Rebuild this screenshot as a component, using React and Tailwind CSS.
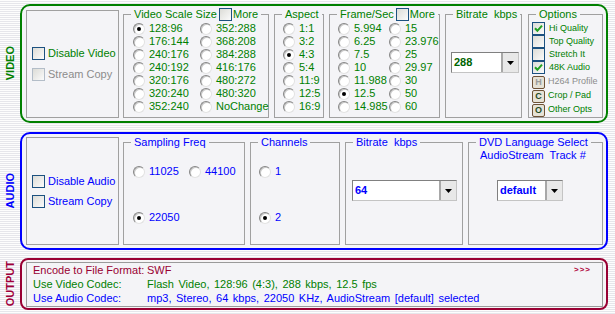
import React from "react";

function Radio({ checked }) {
  return (
    <span className="flex h-[12px] w-[12px] shrink-0 items-center justify-center rounded-full border border-t-[#858585] border-l-[#858585] border-r-[#e2e2e2] border-b-[#e2e2e2] bg-white shadow-[inset_1px_1px_0_#c8c8c8]">
      {checked && <span className="h-[4px] w-[4px] rounded-full bg-black" />}
    </span>
  );
}

function Check({ checked, disabled }) {
  return (
    <span
      className={`flex h-[13px] w-[13px] shrink-0 items-center justify-center border bg-linear-to-br from-[#dcdcd7] to-[#fbfbfb] ${
        disabled ? "border-[#b3bdc8]" : "border-[#1c5180]"
      }`}
    >
      {checked && (
        <svg width="9" height="9" viewBox="0 0 9 9">
          <path d="M1 4.2 L3.4 6.8 L8 1.6" stroke="#21a121" strokeWidth="2" fill="none" />
        </svg>
      )}
    </span>
  );
}

function RadioItem({ label, checked, w }) {
  return (
    <div className={`flex h-[13px] items-center gap-[4px] whitespace-nowrap ${w}`}>
      <Radio checked={checked} />
      <span>{label}</span>
    </div>
  );
}

function Group({ className, legend, children }) {
  return (
    <fieldset className={`shrink-0 border border-[#a0a0a0] ${className}`}>
      <legend className="ml-[7px] px-[3px] leading-[13px]">{legend}</legend>
      {children}
    </fieldset>
  );
}

function Combo({ value, color, w }) {
  return (
    <div className={`flex h-[21px] border border-t-[#808080] border-l-[#808080] border-b-[#c4c4c4] border-r-[#c4c4c4] bg-white ${w}`}>
      <div className={`flex flex-1 items-center pl-[2px] text-[11px] font-bold ${color}`}>{value}</div>
      <div className="flex w-[17px] items-center justify-center border-l-2 border-[#a8a8a8] bg-[#e8e8e8]">
        <svg width="7" height="4" viewBox="0 0 7 4">
          <path d="M0 0h7L3.5 4z" fill="#000" />
        </svg>
      </div>
    </div>
  );
}

function OptBtn({ letter, gray }) {
  return (
    <span
      className={`flex h-[13px] w-[13px] shrink-0 items-center justify-center rounded-[2px] border border-[#6e5236] bg-[#e6e2d6] text-[9px] font-bold leading-none ${
        gray ? "text-[#9a9a9a]" : "text-[#1e4a1e]"
      }`}
    >
      {letter}
    </span>
  );
}

function SideLabel({ text, color }) {
  return (
    <div className="flex w-[20px] shrink-0 items-center justify-center">
      <span className={`rotate-180 text-[11px] font-bold leading-none [writing-mode:vertical-rl] ${color}`}>{text}</span>
    </div>
  );
}

export default function App() {
  const scale1 = ["128:96", "176:144", "240:176", "240:192", "320:176", "320:240", "352:240"];
  const scale2 = ["352:288", "368:208", "384:288", "416:176", "480:272", "480:320", "NoChange"];
  const aspect = ["1:1", "3:2", "4:3", "5:4", "11:9", "12:5", "16:9"];
  const fps1 = ["5.994", "6.25", "7.5", "10", "11.988", "12.5", "14.985"];
  const fps2 = ["15", "23.976", "25", "29.97", "30", "50", "60"];

  return (
    <div className="flex h-[314px] w-[615px] flex-col gap-[9px] overflow-hidden bg-[repeating-linear-gradient(to_bottom,#fdfdfd_0px,#fdfdfd_1px,#e6e6eb_1px,#e6e6eb_2px)] pt-[4px] font-['Liberation_Sans',Arial,sans-serif] text-[11px]">
      {/* VIDEO */}
      <div className="flex h-[119px] shrink-0">
        <SideLabel text="VIDEO" color="text-[#008000]" />
        <div className="flex w-[588px] shrink-0 rounded-[10px] border-2 border-[#008000] bg-[#f4f4f7] pl-[4px] pt-[2px] text-[#008000]">
          <div className="mt-[2px] flex h-[108px] w-[93px] shrink-0 flex-col justify-center gap-[8px] border border-[#a0a0a0] pl-[5px]">
            <div className="flex h-[13px] items-center gap-[3px]">
              <Check />
              <span>Disable Video</span>
            </div>
            <div className="flex h-[13px] items-center gap-[3px] text-[#8c8c8c]">
              <Check disabled />
              <span>Stream Copy</span>
            </div>
          </div>

          <Group
            className="ml-[4px] h-[110px] w-[146px]"
            legend={
              <span className="flex items-center">
                <span>Video Scale Size</span>
                <span className="ml-[2px]">
                  <Check />
                </span>
                <span className="ml-[1px]">More</span>
              </span>
            }
          >
            <div className="flex pl-[9px] pt-[1px]">
              <div className="flex flex-col">
                {scale1.map((s, i) => (
                  <RadioItem key={s} label={s} checked={i === 0} w="w-[67px]" />
                ))}
              </div>
              <div className="flex flex-col">
                {scale2.map((s) => (
                  <RadioItem key={s} label={s} w="w-[66px]" />
                ))}
              </div>
            </div>
          </Group>

          <Group className="ml-[5px] h-[110px] w-[50px]" legend="Aspect">
            <div className="flex flex-col pl-[8px] pt-[1px]">
              {aspect.map((s) => (
                <RadioItem key={s} label={s} checked={s === "4:3"} w="w-[40px]" />
              ))}
            </div>
          </Group>

          <Group
            className="ml-[5px] h-[110px] w-[111px]"
            legend={
              <span className="flex items-center">
                <span>Frame/Sec</span>
                <span className="ml-[2px]">
                  <Check />
                </span>
                <span className="ml-[1px]">More</span>
              </span>
            }
          >
            <div className="flex pl-[8px] pt-[1px]">
              <div className="flex flex-col">
                {fps1.map((s) => (
                  <RadioItem key={s} label={s} checked={s === "12.5"} w="w-[51px]" />
                ))}
              </div>
              <div className="flex flex-col">
                {fps2.map((s) => (
                  <RadioItem key={s} label={s} w="w-[48px]" />
                ))}
              </div>
            </div>
          </Group>

          <Group className="ml-[5px] h-[110px] w-[77px]" legend={<span className="whitespace-pre">Bitrate  kbps</span>}>
            <div className="ml-[5px] mt-[31px]">
              <Combo value="288" color="text-[#006400]" w="w-[68px]" />
            </div>
          </Group>

          <Group className="ml-[6px] h-[110px] w-[75px]" legend="Options">
            <div className="flex flex-col pl-[3px] pt-[1px] text-[9px]">
              <div className="flex h-[13px] items-center gap-[4px]">
                <Check checked />
                <span>Hi Quality</span>
              </div>
              <div className="flex h-[13px] items-center gap-[4px]">
                <Check />
                <span>Top Quality</span>
              </div>
              <div className="flex h-[13px] items-center gap-[4px]">
                <Check />
                <span>Stretch It</span>
              </div>
              <div className="flex h-[13px] items-center gap-[4px]">
                <Check checked />
                <span>48K Audio</span>
              </div>
              <div className="mt-[1px] flex h-[14px] items-center gap-[3px] text-[#8c8c8c]">
                <OptBtn letter="H" gray />
                <span>H264 Profile</span>
              </div>
              <div className="flex h-[14px] items-center gap-[3px]">
                <OptBtn letter="C" />
                <span>Crop / Pad</span>
              </div>
              <div className="flex h-[14px] items-center gap-[3px]">
                <OptBtn letter="O" />
                <span>Other Opts</span>
              </div>
            </div>
          </Group>
        </div>
      </div>

      {/* AUDIO */}
      <div className="-mt-[0px] flex h-[118px] shrink-0">
        <SideLabel text="AUDIO" color="text-[#0000ff]" />
        <div className="flex w-[588px] shrink-0 rounded-[10px] border-2 border-[#0000ff] bg-[#f4f4f7] pl-[4px] pt-[2px] text-[#0000ff]">
          <div className="mt-[1px] flex h-[108px] w-[93px] shrink-0 flex-col justify-center gap-[7px] border border-[#a0a0a0] pl-[5px]">
            <div className="flex h-[13px] items-center gap-[3px]">
              <Check />
              <span>Disable Audio</span>
            </div>
            <div className="flex h-[13px] items-center gap-[3px]">
              <Check />
              <span>Stream Copy</span>
            </div>
          </div>

          <Group className="ml-[4px] h-[109px] w-[122px]" legend="Sampling Freq">
            <div className="flex flex-col pl-[9px] pt-[16px]">
              <div className="flex">
                <RadioItem label="11025" w="w-[56px]" />
                <RadioItem label="44100" w="w-[50px]" />
              </div>
              <div className="mt-[33px] flex">
                <RadioItem label="22050" checked w="w-[56px]" />
              </div>
            </div>
          </Group>

          <Group className="ml-[5px] h-[109px] w-[90px]" legend="Channels">
            <div className="flex flex-col pl-[8px] pt-[16px]">
              <RadioItem label="1" w="w-[40px]" />
              <div className="mt-[33px]">
                <RadioItem label="2" checked w="w-[40px]" />
              </div>
            </div>
          </Group>

          <Group className="ml-[5px] h-[109px] w-[118px]" legend={<span className="whitespace-pre">Bitrate  kbps</span>}>
            <div className="ml-[6px] mt-[31px]">
              <Combo value="64" color="text-[#0000ff]" w="w-[105px]" />
            </div>
          </Group>

          <Group className="ml-[5px] h-[109px] w-[135px]" legend="DVD Language Select">
            <div className="ml-[11px] h-[13px] whitespace-pre leading-[13px]">AudioStream  Track #</div>
            <div className="ml-[28px] mt-[18px]">
              <Combo value="default" color="text-[#0000ff]" w="w-[66px]" />
            </div>
          </Group>
        </div>
      </div>

      {/* OUTPUT */}
      <div className="-mt-[1px] flex h-[52px] shrink-0">
        <SideLabel text="OUTPUT" color="text-[#a0003a]" />
        <div className="flex w-[588px] shrink-0 rounded-[8px] border-2 border-[#990033] bg-[#f6f4f6] pl-[4px] pt-[2px]">
          <div className="flex h-[45px] w-[577px] shrink-0 flex-col border border-[#9a9a9a] bg-[#f4f4f7] pl-[6px] leading-[14px] [word-spacing:1.5px]">
            <div className="flex h-[14px] items-center text-[#990033]">
              <span className="w-[114px] shrink-0 [word-spacing:0px]">Encode to File Format:</span>
              <span>SWF</span>
              <span className="ml-auto mr-[11px] text-[8px] font-bold tracking-[1px] text-[#b0003a]">&gt;&gt;&gt;</span>
            </div>
            <div className="flex h-[14px] items-center text-[#008000]">
              <span className="w-[114px] shrink-0 [word-spacing:0px]">Use Video Codec:</span>
              <span>Flash Video, 128:96 (4:3), 288 kbps, 12.5 fps</span>
            </div>
            <div className="flex h-[14px] items-center text-[#0000ff]">
              <span className="w-[114px] shrink-0 [word-spacing:0px]">Use Audio Codec:</span>
              <span>mp3, Stereo, 64 kbps, 22050 KHz, AudioStream [default] selected</span>
            </div>
          </div>
        </div>
      </div>
    </div>
  );
}
